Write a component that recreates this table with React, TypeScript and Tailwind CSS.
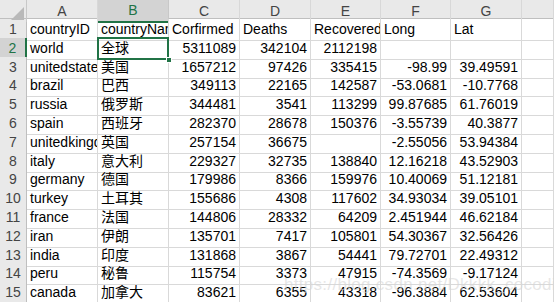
import React from 'react'

type Row = string[]

const columns = ['A', 'B', 'C', 'D', 'E', 'F', 'G', '']

const rows: Row[] = [
  ['countryID', 'countryName', 'Corfirmed', 'Deaths', 'Recovered', 'Long', 'Lat'],
  ['world', '全球', '5311089', '342104', '2112198', '', ''],
  ['unitedstates', '美国', '1657212', '97426', '335415', '-98.99', '39.49591'],
  ['brazil', '巴西', '349113', '22165', '142587', '-53.0681', '-10.7768'],
  ['russia', '俄罗斯', '344481', '3541', '113299', '99.87685', '61.76019'],
  ['spain', '西班牙', '282370', '28678', '150376', '-3.55739', '40.3877'],
  ['unitedkingdom', '英国', '257154', '36675', '', '-2.55056', '53.94384'],
  ['italy', '意大利', '229327', '32735', '138840', '12.16218', '43.52903'],
  ['germany', '德国', '179986', '8366', '159976', '10.40069', '51.12181'],
  ['turkey', '土耳其', '155686', '4308', '117602', '34.93034', '39.05101'],
  ['france', '法国', '144806', '28332', '64209', '2.451944', '46.62184'],
  ['iran', '伊朗', '135701', '7417', '105801', '54.30367', '32.56426'],
  ['india', '印度', '131868', '3867', '54441', '79.72701', '22.49312'],
  ['peru', '秘鲁', '115754', '3373', '47915', '-74.3569', '-9.17124'],
  ['canada', '加拿大', '83621', '6355', '43318', '-96.3884', '62.53604'],
  ['', '', '', '', '', '', ''],
]

const gridCols = 'grid grid-cols-[27px_71px_71px_71px_71px_70px_70px_71px_1fr]'

function isNumber(v: string) {
  return v !== '' && !isNaN(Number(v))
}

export default function App() {
  return (
    <div className="relative w-[554px] h-[302px] overflow-hidden bg-white font-['Liberation_Sans','Noto_Sans_CJK_SC',sans-serif] text-[14px] text-black">
      {/* column headers */}
      <div className={`${gridCols} h-[19px] bg-[#e9e9e9] border-b border-[#bfbfbf]`}>
        <div className="relative border-r border-[#c8c8c8]">
          <svg className="absolute right-[2px] bottom-[2px]" width="13" height="13" viewBox="0 0 13 13">
            <polygon points="13,0 13,13 0,13" fill="#b9b9b9" />
          </svg>
        </div>
        {columns.map((c, i) => (
          <div
            key={i}
            className={
              c === 'B'
                ? 'flex items-center justify-center bg-[#d3d3d3] text-[#217346] border-r border-[#c8c8c8] border-b-2 border-b-[#217346] -mb-px'
                : 'flex items-center justify-center text-[#444] border-r border-[#d8d8d8]'
            }
          >
            {c}
          </div>
        ))}
      </div>

      {/* data rows */}
      {rows.map((row, r) => (
        <div key={r} className={`${gridCols} h-[18.8px]`}>
          <div
            className={
              r === 1
                ? 'flex items-center justify-center bg-[#d3d3d3] text-[#217346] border-b border-[#c8c8c8] border-r-2 border-r-[#217346]'
                : 'flex items-center justify-center bg-[#e9e9e9] text-[#444] border-b border-[#d0d0d0] border-r border-r-[#bfbfbf]'
            }
          >
            {r + 1}
          </div>
          {[...row, ''].map((v, c) => {
            const active = r === 1 && c === 1
            return (
              <div
                key={c}
                className={`relative flex items-center px-[3px] whitespace-nowrap border-r border-b border-[#d9d9d9] ${
                  isNumber(v) && r > 0 ? 'justify-end' : 'justify-start'
                } ${active ? 'overflow-visible z-10' : 'overflow-hidden'}`}
              >
                {v}
                {active && (
                  <>
                    <div className="absolute -left-px -top-px -right-px -bottom-px border-2 border-[#217346] pointer-events-none" />
                    <div className="absolute -right-[4px] -bottom-[4px] w-[6px] h-[6px] bg-[#217346] border border-white" />
                  </>
                )}
              </div>
            )
          })}
        </div>
      ))}

      {/* watermark */}
      <div className="absolute left-[284px] top-[272px] text-[17px] tracking-[0.3px] text-[#d6d6d6]/60 pointer-events-none">
        https://blog.csdn.net/Dkkkk_cocoding
      </div>
    </div>
  )
}
